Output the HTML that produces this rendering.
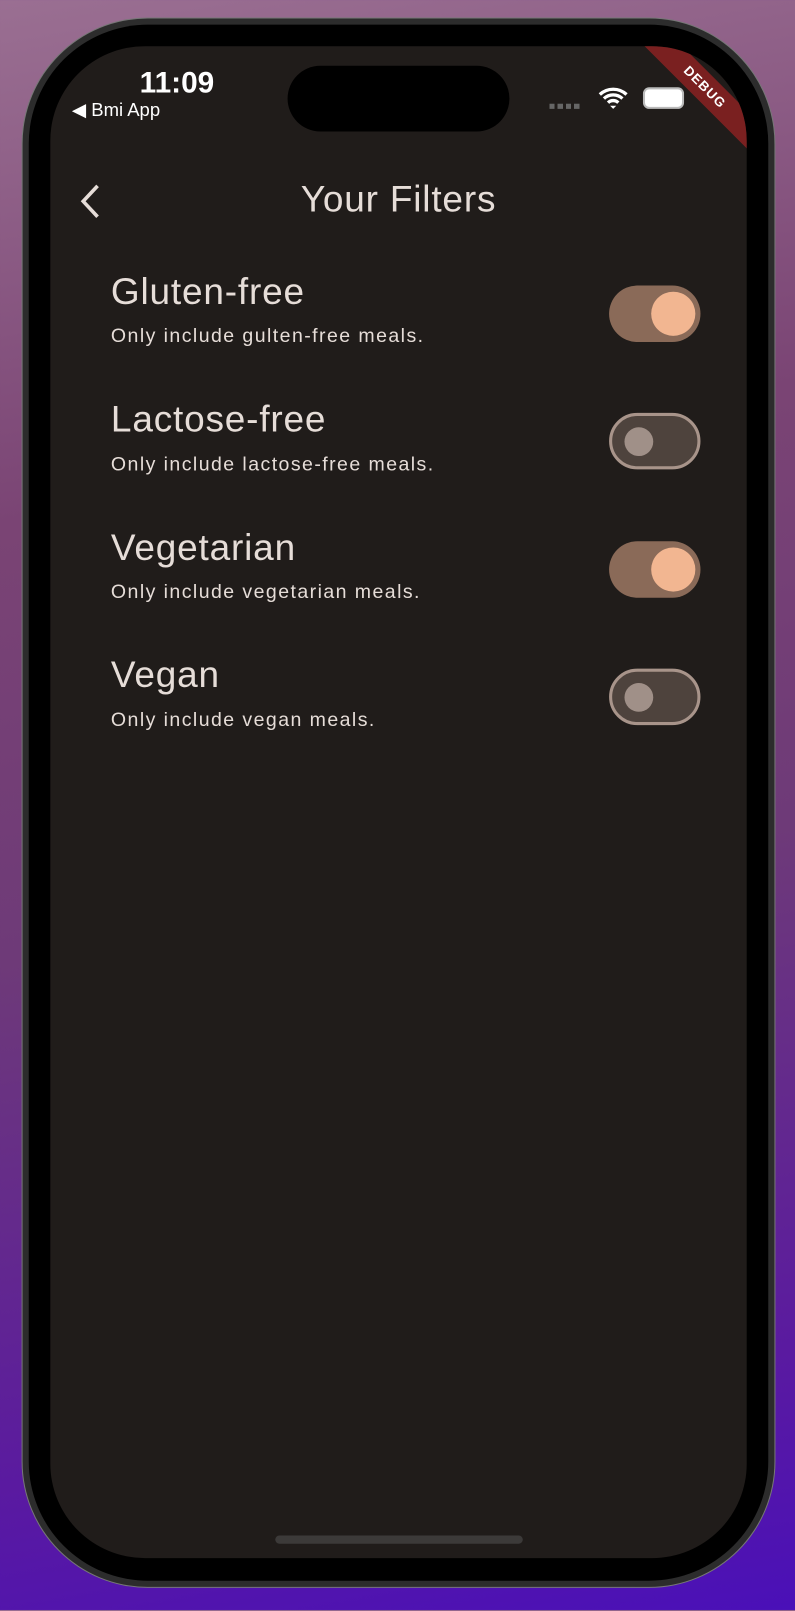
<!DOCTYPE html>
<html><head><style>
html,body{margin:0;padding:0;width:795px;height:1610px;overflow:hidden;}
body{background:linear-gradient(170deg,#9a6f92 0%,#7a4474 30%,#6e3a78 55%,#5a1aa0 85%,#4a10b8 100%);font-family:"Liberation Sans",sans-serif;}
#w{position:absolute;left:0;top:0;width:774px;height:1568px;transform:scale(1.0271);transform-origin:0 0;}
.phone{position:absolute;left:22px;top:18px;width:732px;height:1527px;border-radius:122px;background:#2c2c2c;box-shadow:0 0 0 1px #777;}
.bez{position:absolute;left:6px;top:6px;right:6px;bottom:6px;border-radius:116px;background:#000;}
.scr{position:absolute;left:49px;top:45px;width:678px;height:1472px;border-radius:92px;background:#201c1a;overflow:hidden;}
.t{position:absolute;color:#e6ddd8;white-space:nowrap;}
.h{font-size:36px;letter-spacing:0.8px;}
.s{font-size:19px;letter-spacing:1.4px;}
.sw{position:absolute;left:544px;width:89px;height:55px;border-radius:28px;box-sizing:border-box;}
.on{background:#8a6a58;}
.on:after{content:"";position:absolute;left:41px;top:6px;width:43px;height:43px;border-radius:50%;background:#f2b691;}
.off{background:#4e433d;border:3px solid #a8948a;}
.off:after{content:"";position:absolute;left:12px;top:11px;width:28px;height:28px;border-radius:50%;background:#a09088;}
</style></head><body><div id="w">
<div class="phone"><div class="bez"></div></div>
<div class="scr">
 <div class="t" style="left:87px;top:20px;font-size:29px;font-weight:bold;color:#fff">11:09</div>
 <div class="t" style="left:21px;top:52px;font-size:18px;color:#fff">◀ Bmi App</div>
 <div style="position:absolute;left:231px;top:19px;width:216px;height:64px;border-radius:32px;background:#000"></div>
 <div style="position:absolute;left:486px;top:56px;width:30px;height:5px;background:repeating-linear-gradient(90deg,#666 0 5px,transparent 5px 8px)"></div>
 <svg style="position:absolute;left:533px;top:38px" width="30" height="24" viewBox="0 0 30 24"><path d="M2 9a19 19 0 0 1 26 0M6 13a13 13 0 0 1 18 0M10 17a7 7 0 0 1 10 0" stroke="#fff" stroke-width="3.2" fill="none"/><path d="M12 20l3 3 3-3z" fill="#fff"/></svg>
 <div style="position:absolute;left:577px;top:40px;width:40px;height:21px;border-radius:6px;background:#fff;border:2px solid #bbb;box-sizing:border-box"></div>
 <div style="position:absolute;left:557px;top:27px;width:160px;height:26px;background:#7a2020;transform:rotate(45deg);color:#fff;font-size:13px;font-weight:bold;text-align:center;line-height:26px;letter-spacing:1px">DEBUG</div>
 <svg style="position:absolute;left:26px;top:133px" width="26" height="36" viewBox="0 0 26 36"><path d="M20 3L6 18l14 15" stroke="#e6ddd8" stroke-width="3.5" fill="none"/></svg>
 <div class="t h" style="left:0;width:678px;text-align:center;top:128px;">Your Filters</div>

 <div class="t h" style="left:59px;top:218px;">Gluten-free</div>
 <div class="t s" style="left:59px;top:272px;">Only include gulten-free meals.</div>
 <div class="sw on" style="top:233px"></div>

 <div class="t h" style="left:59px;top:342px;">Lactose-free</div>
 <div class="t s" style="left:59px;top:397px;">Only include lactose-free meals.</div>
 <div class="sw off" style="top:357px"></div>

 <div class="t h" style="left:59px;top:467px;">Vegetarian</div>
 <div class="t s" style="left:59px;top:521px;">Only include vegetarian meals.</div>
 <div class="sw on" style="top:482px"></div>

 <div class="t h" style="left:59px;top:591px;">Vegan</div>
 <div class="t s" style="left:59px;top:646px;">Only include vegan meals.</div>
 <div class="sw off" style="top:606px"></div>

 <div style="position:absolute;left:219px;top:1450px;width:241px;height:8px;border-radius:4px;background:#3c3a39"></div>
</div>
</div></body></html>
